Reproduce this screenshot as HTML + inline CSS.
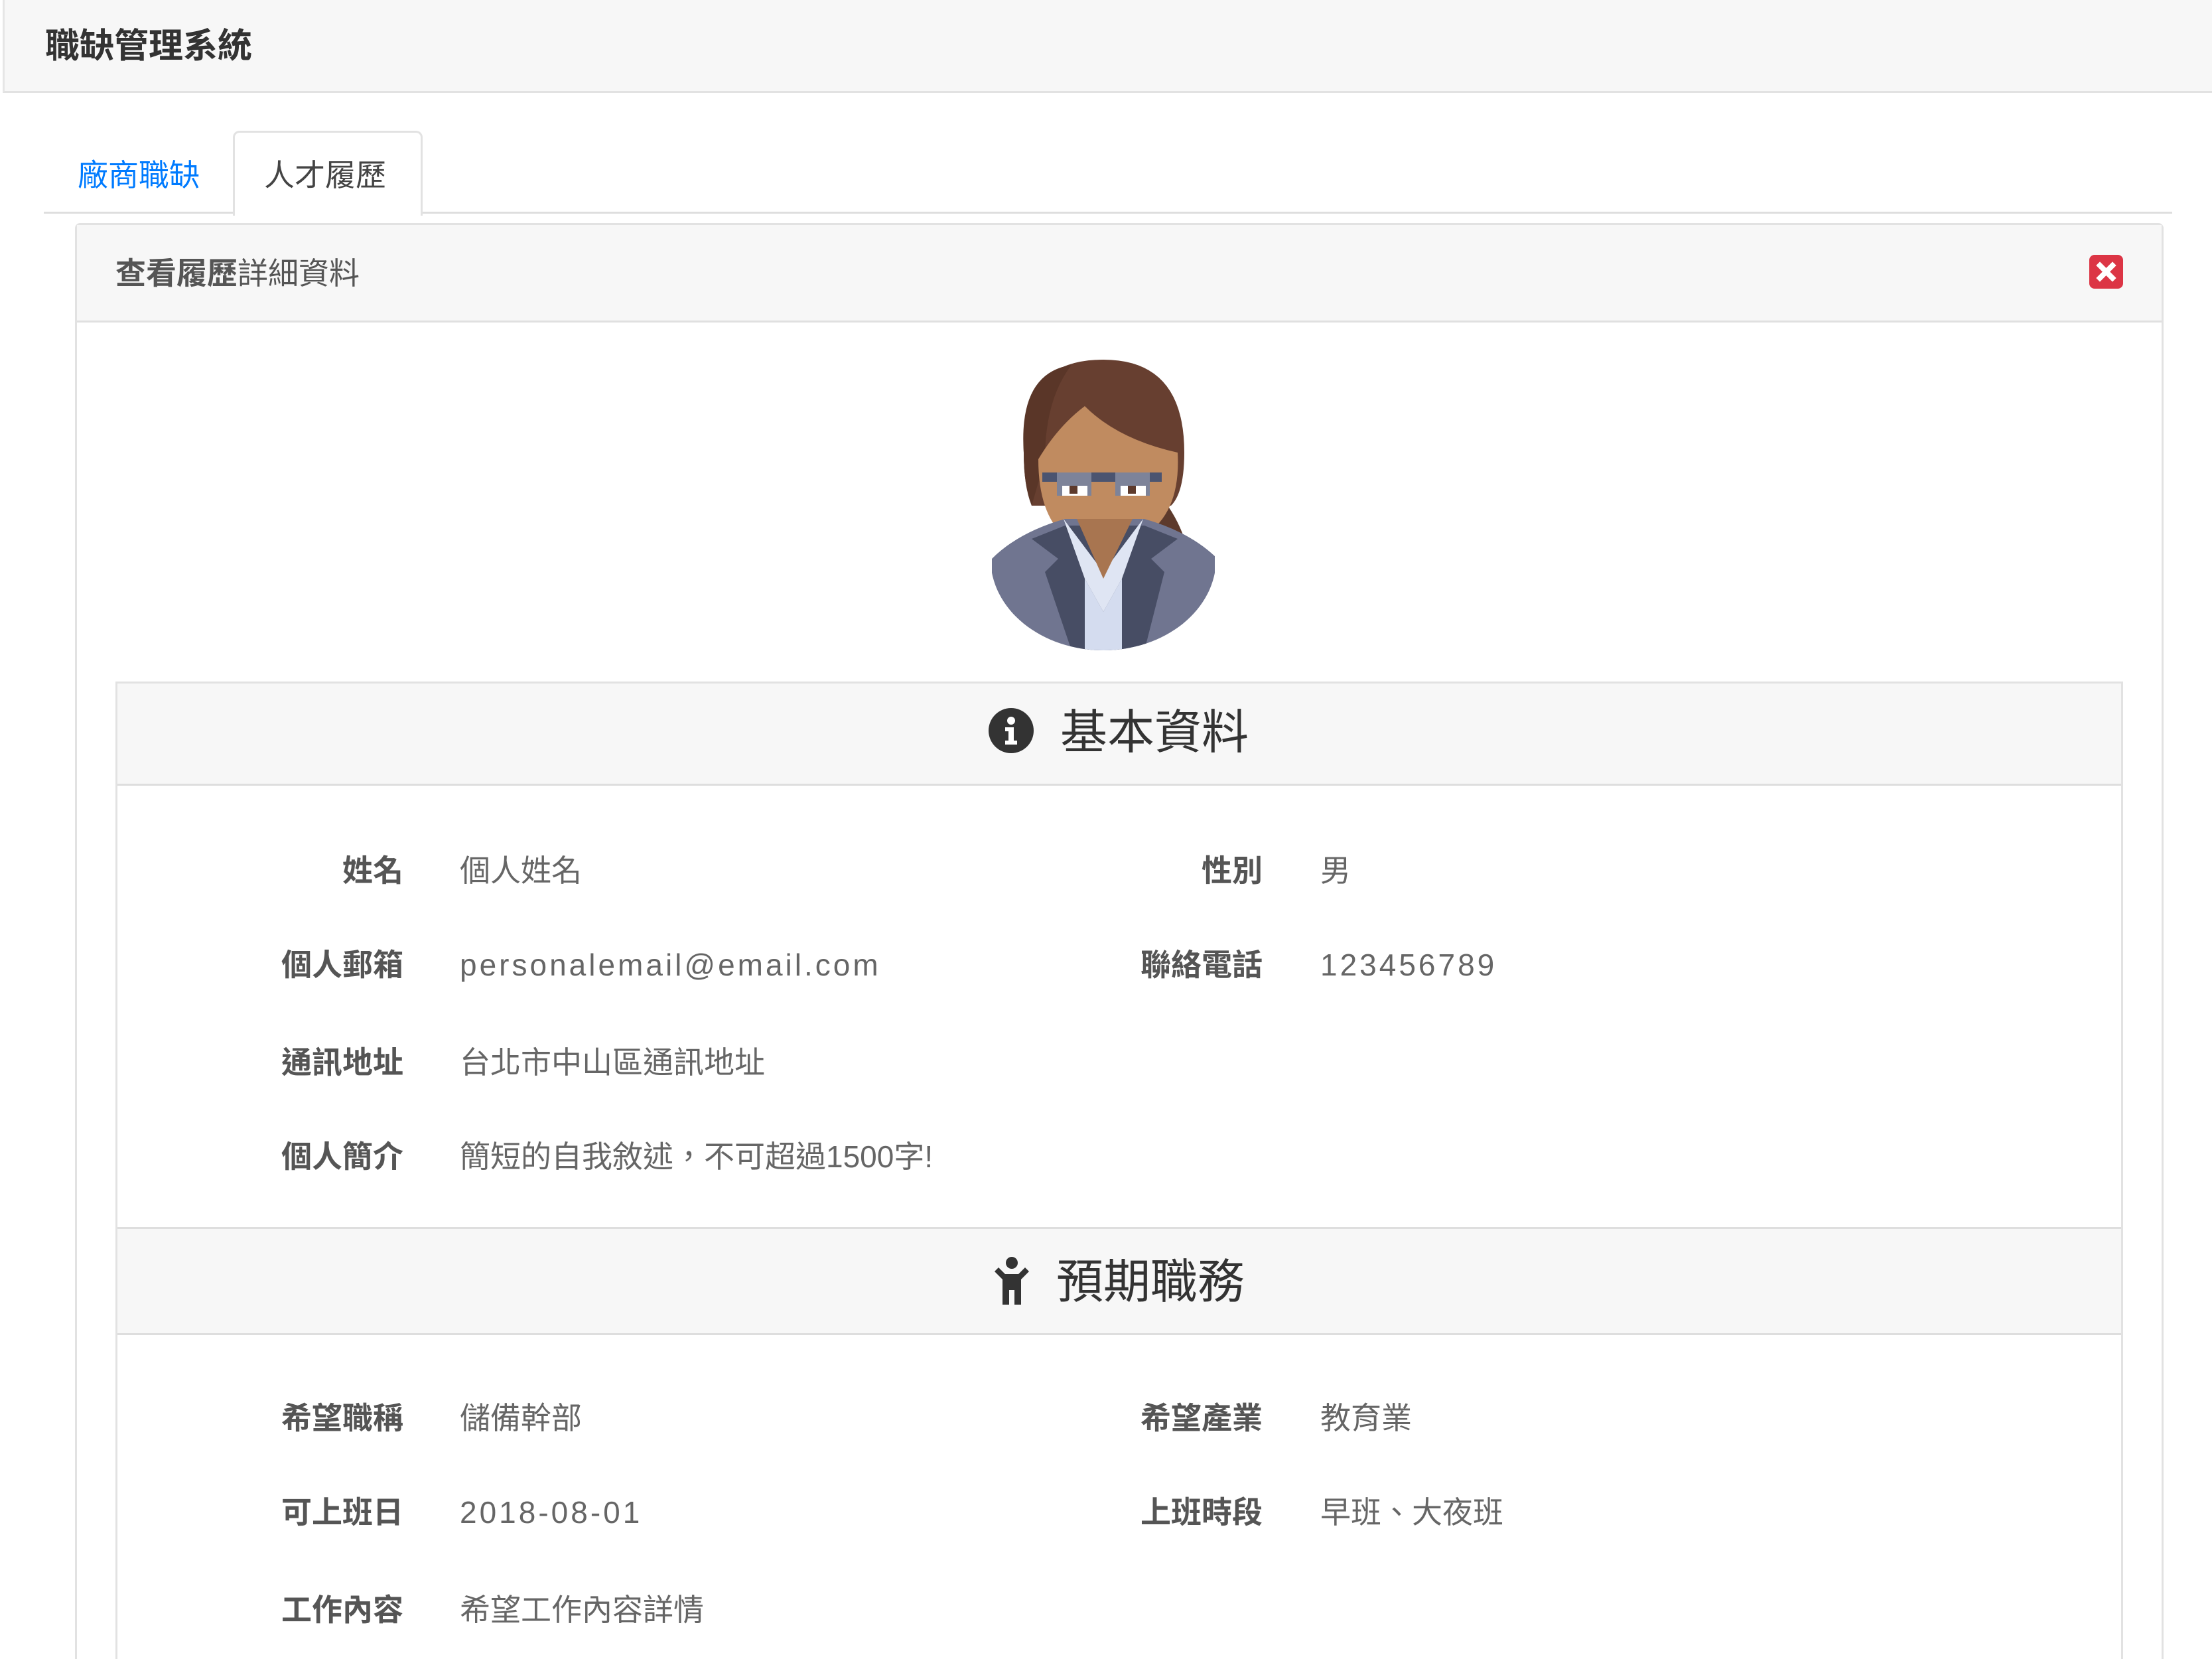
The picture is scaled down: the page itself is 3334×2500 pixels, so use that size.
<!DOCTYPE html>
<html><head><meta charset="utf-8">
<style>
html,body{margin:0;padding:0;width:3334px;height:2500px;overflow:hidden;background:#fff;font-family:"Liberation Sans","Noto Sans CJK TC",sans-serif;}
#w{position:relative;width:3334px;height:2500px;overflow:hidden;}
.a{position:absolute;white-space:nowrap;}
.lbl{position:absolute;white-space:nowrap;font-size:46px;font-weight:bold;color:#555;text-align:right;width:400px;line-height:60px;}
.val{position:absolute;white-space:nowrap;font-size:46px;color:#666;line-height:60px;}
.en{letter-spacing:4px;}
</style></head><body><div id="w">
<div class="a" style="left:4px;top:0;width:3330px;height:137px;background:#f7f7f7;border-bottom:3px solid #e2e2e2;border-left:3px solid #e6e6e6;box-sizing:border-box;height:140px;"></div>
<div class="a" style="left:68px;top:40px;font-size:52px;line-height:60px;color:#333;font-weight:bold;">職缺管理系統</div>

<div class="a" style="left:66px;top:319px;width:3208px;height:3px;background:#dedede;"></div>
<div class="a" style="left:351px;top:197px;width:280px;height:125px;background:#fff;border:3px solid #e2e2e2;border-bottom:none;border-radius:10px 10px 0 0;"></div>
<div class="a" style="left:117px;top:234px;font-size:46px;line-height:60px;color:#007bff;">廠商職缺</div>
<div class="a" style="left:398px;top:234px;font-size:46px;line-height:60px;color:#444;">人才履歷</div>

<div class="a" style="left:113px;top:336px;width:3142px;height:2161px;border:3px solid #e2e2e2;border-bottom:none;border-radius:8px 8px 0 0;"></div>
<div class="a" style="left:116px;top:339px;width:3142px;height:144px;background:#f7f7f7;border-bottom:3px solid #e0e0e0;"></div>
<div class="a" style="left:174px;top:382px;font-size:46px;line-height:60px;color:#555;font-weight:bold;">查看履歷<span style="font-weight:normal">詳細資料</span></div>
<div class="a" style="left:3149px;top:384px;width:51px;height:51px;background:#dc3545;border-radius:8px;">
<svg width="51" height="51" viewBox="0 0 51 51"><path d="M16 16L35 35M35 16L16 35" stroke="#fff" stroke-width="8" stroke-linecap="square"/></svg></div>

<svg class="a" style="left:1495px;top:542px" width="336" height="438" viewBox="0 0 336 438">
<defs><clipPath id="c"><ellipse cx="168" cy="300" rx="170" ry="138"/></clipPath></defs>
<path d="M250 200 Q300 260 300 330 L260 340 Q250 270 230 230Z" fill="#5d3a2c"/>
<path d="M48 140 Q40 0 168 0 Q290 0 290 140 Q290 200 270 220 L60 220 Q48 190 48 140Z" fill="#673f30"/>
<path d="M48 140 Q40 20 120 8 Q80 60 80 150 L60 220 Q48 190 48 140Z" fill="#5a3628"/>
<rect x="128" y="230" width="84" height="80" fill="#a87550"/>
<path d="M70 150 Q100 100 140 70 Q190 120 280 140 Q285 230 230 265 Q190 290 168 290 Q140 290 108 265 Q70 230 70 150Z" fill="#c08b60"/>
<path d="M76 170 h180 v14 h-180z" fill="#4b5470"/>
<rect x="98" y="170" width="52" height="35" fill="#7d8399"/><rect x="186" y="170" width="52" height="35" fill="#7d8399"/>
<rect x="106" y="190" width="38" height="15" fill="#fff"/><rect x="194" y="190" width="38" height="15" fill="#fff"/>
<rect x="117" y="190" width="12" height="12" fill="#5d3a2c"/><rect x="205" y="190" width="12" height="12" fill="#5d3a2c"/>
<ellipse cx="168" cy="259" rx="27" ry="9" fill="#955e3f"/>
<g clip-path="url(#c)">
<path d="M-10 438 L0 300 Q40 260 110 240 L230 240 Q300 260 340 300 L346 438Z" fill="#707590"/>
<path d="M110 250 L60 270 L100 300 L80 320 L120 438 L230 438 L260 320 L240 300 L280 270 L230 250Z" fill="#474d64"/>
<path d="M108 240 L140 330 L168 380 L196 330 L228 240 L168 320Z" fill="#dfe5f3"/>
<path d="M140 330 L168 380 L196 330 L196 438 L140 438Z" fill="#d4dcef"/>
<path d="M128 240 L168 330 L212 240Z" fill="#a87550"/>
</g>
</svg>

<div class="a" style="left:174px;top:1027px;width:3020px;height:1473px;border:3px solid #e2e2e2;border-bottom:none;"></div>
<div class="a" style="left:177px;top:1030px;width:3020px;height:151px;background:#f7f7f7;border-bottom:3px solid #dedede;"></div>
<svg class="a" style="left:1490px;top:1067px" width="68" height="68" viewBox="0 0 68 68"><circle cx="34" cy="34" r="34" fill="#333"/><circle cx="34" cy="19" r="6" fill="#fff"/><path d="M25 29h13v20h5v6H25v-6h5V35h-5z" fill="#fff"/></svg>
<div class="a" style="left:1598px;top:1062px;font-size:71px;line-height:86px;color:#333;">基本資料</div>

<div class="lbl" style="left:208px;top:1282px;">姓名</div><div class="val" style="left:693px;top:1282px;">個人姓名</div>
<div class="lbl" style="left:1503px;top:1282px;">性別</div><div class="val" style="left:1990px;top:1282px;">男</div>
<div class="lbl" style="left:208px;top:1424px;">個人郵箱</div><div class="val en" style="left:693px;top:1424px;">personalemail@email.com</div>
<div class="lbl" style="left:1503px;top:1424px;">聯絡電話</div><div class="val en" style="left:1990px;top:1424px;">123456789</div>
<div class="lbl" style="left:208px;top:1571px;">通訊地址</div><div class="val" style="left:693px;top:1571px;">台北市中山區通訊地址</div>
<div class="lbl" style="left:208px;top:1713px;">個人簡介</div><div class="val" style="left:693px;top:1713px;">簡短的自我敘述，不可超過1500字!</div>

<div class="a" style="left:177px;top:1849px;width:3020px;height:157px;background:#f7f7f7;border-top:3px solid #dedede;border-bottom:3px solid #dedede;"></div>
<svg class="a" style="left:1497px;top:1894px" width="56" height="72" viewBox="0 0 56 72"><circle cx="28" cy="9" r="9" fill="#333"/><path d="M2 22 L8 16 L18 26 H38 L48 16 L54 22 L42 34 V72 H32 V50 H24 V72 H14 V34Z" fill="#333"/></svg>
<div class="a" style="left:1592px;top:1890px;font-size:71px;line-height:86px;color:#333;">預期職務</div>

<div class="lbl" style="left:208px;top:2107px;">希望職稱</div><div class="val" style="left:693px;top:2107px;">儲備幹部</div>
<div class="lbl" style="left:1503px;top:2107px;">希望產業</div><div class="val" style="left:1990px;top:2107px;">教育業</div>
<div class="lbl" style="left:208px;top:2249px;">可上班日</div><div class="val en" style="left:693px;top:2249px;">2018-08-01</div>
<div class="lbl" style="left:1503px;top:2249px;">上班時段</div><div class="val" style="left:1990px;top:2249px;">早班、大夜班</div>
<div class="lbl" style="left:208px;top:2396px;">工作內容</div><div class="val" style="left:693px;top:2396px;">希望工作內容詳情</div>
</div></body></html>
